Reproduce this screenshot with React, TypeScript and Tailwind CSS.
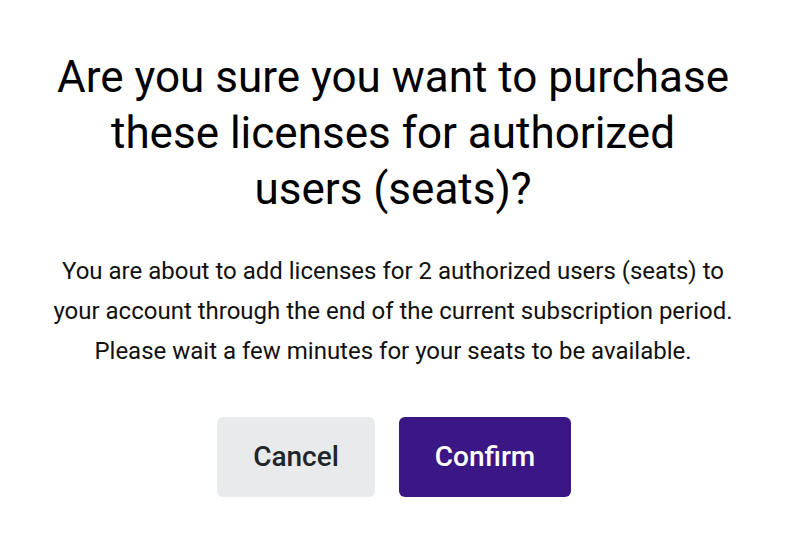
export default function App() {
  return (
    <div className="flex min-h-[554px] w-[786px] flex-col items-center bg-white pt-[49px] font-['Roboto',sans-serif] text-black">
      <h1 className="text-center text-[44px] leading-[56px] font-normal">
        Are you sure you want to purchase
        <br />
        these licenses for authorized
        <br />
        users (seats)?
      </h1>
      <p className="mt-[34px] text-center text-[24px] leading-[40px] text-[#111]">
        You are about to add licenses for 2 authorized users (seats) to
        <br />
        your account through the end of the current subscription period.
        <br />
        Please wait a few minutes for your seats to be available.
      </p>
      <div className="mt-[46px] flex gap-[24px] pl-[2px]">
        <button className="h-[80px] w-[158px] rounded-[6px] bg-[#e9eaec] text-[28px] font-medium text-[#212529]">
          Cancel
        </button>
        <button className="h-[80px] w-[172px] rounded-[6px] bg-[#3a1785] text-[28px] font-medium text-white">
          Confirm
        </button>
      </div>
    </div>
  );
}
